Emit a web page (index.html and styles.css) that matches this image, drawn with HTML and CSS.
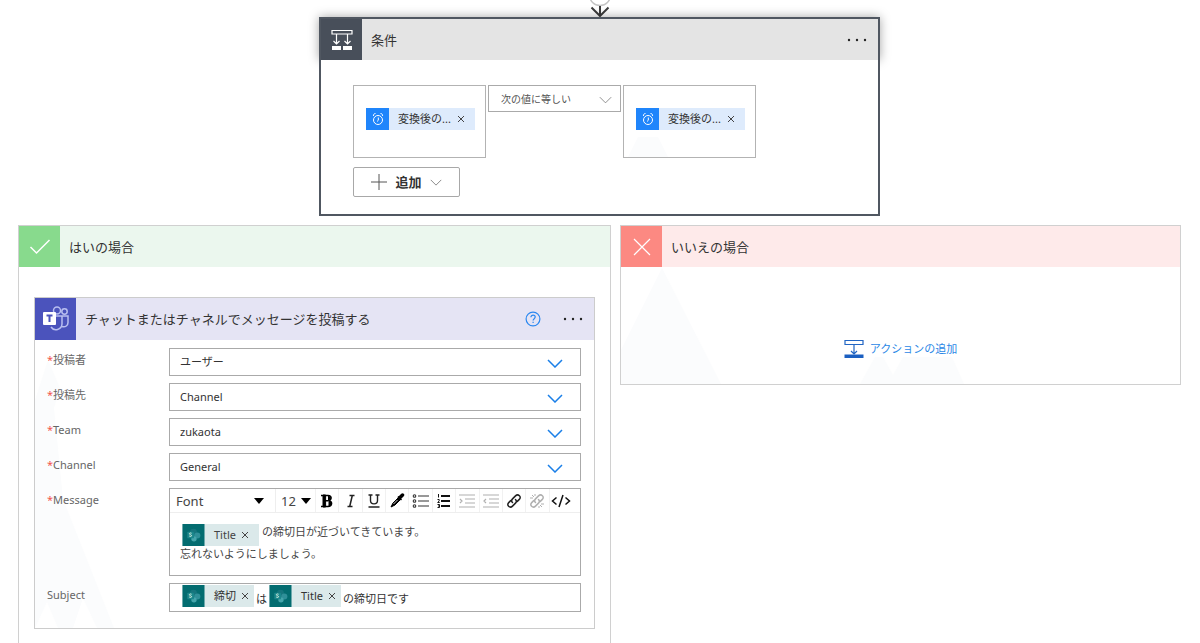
FILE: index.html
```html
<!DOCTYPE html>
<html lang="ja">
<head>
<meta charset="utf-8">
<title>条件</title>
<link rel="stylesheet" href="styles.css">
</head>
<body>
<svg class="symbols" aria-hidden="true">
  <symbol id="chevron" viewBox="0 0 16 9"><path d="M1 1l7 7 7-7" fill="none" stroke="currentColor"/></symbol>
  <symbol id="clock" viewBox="0 0 14 14"><g fill="none" stroke="#fff"><circle cx="7" cy="8" r="4.500"/><path d="M7.300 5.500v2.800L6 9.500M2.500 4a2 2 0 0 1 2-2.500M11.500 4a2 2 0 0 0-2-2.500"/></g></symbol>
  <symbol id="sharepoint" viewBox="0 0 23 23"><rect width="23" height="23" fill="#036c70"/><circle cx="11.500" cy="8.500" r="3.600" fill="#16757d"/><circle cx="15.500" cy="12" r="3.200" fill="#2f8f98"/><circle cx="12" cy="15.500" r="2.800" fill="#45a5ab"/><rect x="5" y="8" width="7" height="7" rx="1" fill="#1b878c"/><path d="M9.500 9.700c-1-.6-2.300-.3-2.300.5 0 1.200 2.300.8 2.300 2 0 .9-1.600 1.100-2.500.3" fill="none" stroke="#d8efdd"/></symbol>
  <symbol id="link" viewBox="0 0 16 16"><g fill="none" stroke="currentColor" stroke-width="1.500" stroke-linecap="round"><path d="M6.500 9.500c-1.400-1.400-1-2.600 0-3.600l3-3c1.300-1.300 2.800-1.200 3.900-.2s1.100 2.500-.1 3.700l-2 2"/><path d="M9.500 6.500c1.400 1.400 1 2.600 0 3.600l-3 3c-1.300 1.300-2.800 1.200-3.900.2s-1.100-2.500.1-3.700l2-2"/></g></symbol>
</svg>
<main class="canvas">
  <svg class="connector" viewBox="0 0 24 17" aria-hidden="true"><circle cx="12" cy="-5" r="10.500" fill="#fff" stroke="#c4c4c4" stroke-width="1.500"/><path d="M12 6v10M3.500 7.500L12 16l8.500-8.500" fill="none" stroke="#3b3b3b" stroke-width="2"/></svg>

  <section class="condition">
    <header class="card-head condition-head">
      <span class="head-icon"><svg width="24" height="24" viewBox="0 0 24 24" aria-hidden="true"><g fill="none" stroke="#fff" stroke-width="1.200"><path d="M2 2.500h20v3.500H2zM6.500 6v10M17.500 6v10M3.500 13l3 3 3-3M14.500 13l3 3 3-3"/></g><path d="M2 18h9v4H2zM13 18h9v4h-9z" fill="#fff"/></svg></span>
      <h2 class="title">条件</h2>
      <button class="more" aria-label="メニュー"><svg width="20" height="4" viewBox="0 0 20 4"><circle cx="2" cy="2" r="1.200"/><circle cx="10" cy="2" r="1.200"/><circle cx="18" cy="2" r="1.200"/></svg></button>
    </header>
    <div class="condition-body">
      <div class="expression">
        <div class="operand" role="textbox" aria-label="値"><span class="chip chip-blue"><span class="chip-icon"><svg width="14" height="14"><use href="#clock"/></svg></span><span class="chip-text">変換後の...</span><button class="chip-x" aria-label="削除"><svg width="8" height="8" viewBox="0 0 8 8"><path d="M1 1l6 6M7 1L1 7"/></svg></button></span></div>
        <div class="picker operator"><select aria-label="演算子"><option>次の値に等しい</option></select><svg class="arrow" width="13" height="8"><use href="#chevron"/></svg></div>
        <div class="operand" role="textbox" aria-label="値"><svg class="facet facet-operand" viewBox="0 0 40 20" aria-hidden="true"><path d="M10 0h20l10 20H0z"/></svg><span class="chip chip-blue"><span class="chip-icon"><svg width="14" height="14"><use href="#clock"/></svg></span><span class="chip-text">変換後の...</span><button class="chip-x" aria-label="削除"><svg width="8" height="8" viewBox="0 0 8 8"><path d="M1 1l6 6M7 1L1 7"/></svg></button></span></div>
      </div>
      <button class="add"><svg width="16" height="16" viewBox="0 0 16 16"><path d="M8 0v16M0 8h16" stroke="#555"/></svg>追加<svg class="add-arrow" width="12" height="7"><use href="#chevron"/></svg></button>
    </div>
  </section>

  <div class="branches">
    <section class="branch branch-yes">
      <header class="card-head">
        <span class="head-icon"><svg width="22" height="18" viewBox="0 0 22 18" aria-hidden="true"><path d="M1.500 9l6 6L20.500 2" fill="none" stroke="#fff" stroke-width="1.500"/></svg></span>
        <h2 class="title">はいの場合</h2>
      </header>
      <section class="action">
        <svg class="facet facet-action" viewBox="0 0 80 268" aria-hidden="true"><path d="M0 40L13 0l12 28-6 20 9 91 51 129H62l-14-30-10 30H23L12 242 0 268z"/></svg>
        <header class="card-head action-head">
          <span class="head-icon"><svg width="28" height="26" viewBox="0 0 28 26" aria-hidden="true"><g fill="none" stroke="#b9bff0" stroke-width="1.500"><circle cx="15" cy="4.500" r="3.500"/><circle cx="22.500" cy="5.500" r="2.700"/><path d="M14 10h6v8a6 6 0 0 1-11 3M20 10h6v6.500c0 3-2.500 5-6 4"/></g><rect x="1" y="6" width="13" height="13" rx="1" fill="#fff"/><path d="M4.500 9.500h6M7.500 9.500v6.500" stroke="#4b53bc" stroke-width="2"/></svg></span>
          <h3 class="title">チャットまたはチャネルでメッセージを投稿する</h3>
          <button class="help" aria-label="ヘルプ"><svg width="16" height="16" viewBox="0 0 16 16"><g fill="none" stroke="#2b88f0" stroke-width="1.200"><circle cx="8" cy="8" r="6.900"/><path d="M5.900 6.300c0-2.900 4.300-2.700 4.300-.2 0 1.500-2.100 1.700-2.100 3.400M8.100 10.700V12"/></g></svg></button>
          <button class="more" aria-label="メニュー"><svg width="20" height="4" viewBox="0 0 20 4"><circle cx="2" cy="2" r="1.200"/><circle cx="10" cy="2" r="1.200"/><circle cx="18" cy="2" r="1.200"/></svg></button>
        </header>
        <form class="fields">
          <label for="poster"><span class="star">*</span>投稿者</label>
          <div class="picker"><select id="poster"><option>ユーザー</option></select><svg class="arrow" width="16" height="9"><use href="#chevron"/></svg></div>
          <label for="place"><span class="star">*</span>投稿先</label>
          <div class="picker"><select id="place"><option>Channel</option></select><svg class="arrow" width="16" height="9"><use href="#chevron"/></svg></div>
          <label for="team"><span class="star">*</span>Team</label>
          <div class="picker"><select id="team"><option>zukaota</option></select><svg class="arrow" width="16" height="9"><use href="#chevron"/></svg></div>
          <label for="channel"><span class="star">*</span>Channel</label>
          <div class="picker"><select id="channel"><option>General</option></select><svg class="arrow" width="16" height="9"><use href="#chevron"/></svg></div>
          <span class="label" id="message"><span class="star">*</span>Message</span>
          <div class="editor">
            <div class="toolbar">
              <div class="tool-pick font-pick"><select aria-label="Font"><option>Font</option></select><svg width="10" height="6" viewBox="0 0 10 6"><path d="M0 0h10L5 6z"/></svg></div>
              <div class="tool-pick size-pick"><select aria-label="サイズ"><option>12</option></select><svg width="10" height="6" viewBox="0 0 10 6"><path d="M0 0h10L5 6z"/></svg></div>
              <div class="tools">
                <button type="button" class="tool" aria-label="太字"><svg width="16" height="16" viewBox="0 0 16 16"><path d="M2 2.500h7c4.500 0 3.500 4.500.8 5.200C13.800 8 13.500 13.500 9 13.500H2M5.200 2v12M5 7.700h4.500" fill="none" stroke="#000" stroke-width="1.500"/><path d="M4 2h2.600v12H4zM9.500 3c3.500 1 1.500 4 0 4.500zM10 8.300c3.800 1 2 4.400 0 5z" stroke="#000"/></svg></button>
                <button type="button" class="tool" aria-label="斜体"><svg width="16" height="16" viewBox="0 0 16 16"><path d="M6.500 2.500h5M4.500 13.500h5M9.300 2.500l-2.600 11" fill="none" stroke="#222" stroke-width="1.500"/></svg></button>
                <button type="button" class="tool" aria-label="下線"><svg width="16" height="16" viewBox="0 0 16 16"><path d="M2.500 2h4M9.500 2h4M4.500 2v5.500c0 4.500 7 4.500 7 0V2M2.500 14h11" fill="none" stroke="#222" stroke-width="1.400"/></svg></button>
                <button type="button" class="tool" aria-label="色"><svg width="16" height="16" viewBox="0 0 16 16"><path d="M2 14l2-4 5.500-5.500 2 2L6 12z" fill="#000" stroke="#000"/><path d="M9 3.500l3.500 3.500" stroke="#000" stroke-width="1.500"/><path d="M10.500 5l3-3" stroke="#000" stroke-width="3.500" stroke-linecap="round"/><path d="M4.500 11l4-4" stroke="#fff" stroke-width=".8"/></svg></button>
                <button type="button" class="tool" aria-label="箇条書き"><svg width="18" height="16" viewBox="0 0 18 16"><g fill="none" stroke="#333" stroke-width="1.100"><circle cx="2.500" cy="3" r="1.300"/><circle cx="2.500" cy="8" r="1.300"/><circle cx="2.500" cy="13" r="1.300"/><path d="M6 3h11M6 8h11M6 13h11"/></g></svg></button>
                <button type="button" class="tool" aria-label="番号付き"><svg width="16" height="16" viewBox="0 0 16 16"><path d="M5 3h9M5 8h9M5 13h9" stroke="#111" stroke-width="1.800"/><path d="M2.500 1v3.500M1.500 6.500h1.700v1.400l-1.500 1.600h2M1.500 11.500h2v3h-2M2 13h1.500" fill="none" stroke="#111"/></svg></button>
                <button type="button" class="tool tool-off" aria-label="インデント" disabled><svg width="18" height="16" viewBox="0 0 18 16"><path d="M1 2h16M7 6h10M7 10h10M1 14h16M2 6l2 2-2 2" fill="none" stroke="#b0b0b0" stroke-width="1.200"/></svg></button>
                <button type="button" class="tool tool-off" aria-label="インデント解除" disabled><svg width="18" height="16" viewBox="0 0 18 16"><path d="M1 2h16M7 6h10M7 10h10M1 14h16M4 6L2 8l2 2" fill="none" stroke="#b0b0b0" stroke-width="1.200"/></svg></button>
                <button type="button" class="tool" aria-label="リンク"><svg width="16" height="16"><use href="#link"/></svg></button>
                <button type="button" class="tool tool-off" aria-label="リンク解除" disabled><svg width="16" height="16" viewBox="0 0 16 16"><use href="#link"/><path d="M3 2l2 2M1 5h3M6 1v2M13 14l-2-2M15 11h-3M10 15v-2" stroke="#b0b0b0"/></svg></button>
                <button type="button" class="tool" aria-label="コード"><svg width="20" height="16" viewBox="0 0 20 16"><path d="M5.500 4.500L1.500 8l4 3.500M14.500 4.500l4 3.500-4 3.500M12 2L8 14" fill="none" stroke="#111" stroke-width="1.500"/></svg></button>
              </div>
            </div>
            <div class="message" role="textbox" contenteditable="true" spellcheck="false" aria-labelledby="message"><div class="line"><span class="chip chip-teal"><svg class="chip-logo" width="23" height="22"><use href="#sharepoint"/></svg><span class="chip-text">Title</span><button type="button" class="chip-x" aria-label="削除"><svg width="8" height="8" viewBox="0 0 8 8"><path d="M1 1l6 6M7 1L1 7"/></svg></button></span><span>の締切日が近づいてきています。</span></div><div>忘れないようにしましょう。</div></div>
          </div>
          <span class="label" id="subject">Subject</span>
          <div class="subject" role="textbox" contenteditable="true" spellcheck="false" aria-labelledby="subject"><span class="chip chip-teal"><svg class="chip-logo" width="23" height="22"><use href="#sharepoint"/></svg><span class="chip-text">締切</span><button type="button" class="chip-x" aria-label="削除"><svg width="8" height="8" viewBox="0 0 8 8"><path d="M1 1l6 6M7 1L1 7"/></svg></button></span><span>は</span><span class="chip chip-teal"><svg class="chip-logo" width="23" height="22"><use href="#sharepoint"/></svg><span class="chip-text">Title</span><button type="button" class="chip-x" aria-label="削除"><svg width="8" height="8" viewBox="0 0 8 8"><path d="M1 1l6 6M7 1L1 7"/></svg></button></span><span>の締切日です</span></div>
        </form>
      </section>
    </section>

    <section class="branch branch-no">
      <svg class="facet facet-no" viewBox="0 0 350 116" aria-hidden="true"><path d="M0 82L41 0l59 116H0z"/><path d="M239 116l15-27h8l10 18 10-18h49l12 27z"/></svg>
      <header class="card-head">
        <span class="head-icon"><svg width="18" height="18" viewBox="0 0 18 18" aria-hidden="true"><path d="M1 1l16 16M17 1L1 17" stroke="#fff" stroke-width="1.200"/></svg></span>
        <h2 class="title">いいえの場合</h2>
      </header>
      <div class="empty">
        <button class="add-action"><svg width="20" height="20" viewBox="0 0 20 20" aria-hidden="true"><path d="M1 1.500h18v4H1zM10 6v9M7 12l3 3 3-3" fill="none" stroke="#2266c4" stroke-width="1.200"/><path d="M.5 15.500h19V19H.5z" fill="#1b5fc1"/></svg>アクションの追加</button>
      </div>
    </section>
  </div>
</main>
</body>
</html>
```

FILE: styles.css
```css
* { box-sizing: border-box; }

html, body { height: 100%; }

body {
  margin: 0;
  overflow: hidden;
  background: #fff;
  color: #333;
  font: 11px/22px "Noto Sans", "Noto Sans CJK JP", sans-serif;
}

svg { display: block; flex: none; }

button, select {
  margin: 0;
  padding: 0;
  border: 0;
  border-radius: 0;
  background: none;
  color: inherit;
  font: inherit;
}

button {
  display: flex;
  align-items: center;
  justify-content: center;
}

select { appearance: none; width: 100%; height: 100%; }

.symbols { position: absolute; width: 0; height: 0; }

.canvas {
  display: flex;
  flex-direction: column;
  padding: 0 19px 0 18px;
}

.connector { width: 24px; height: 17px; align-self: center; }

/* Shared card header */
.card-head { display: flex; align-items: center; height: 41px; position: relative; }

.head-icon {
  display: flex;
  flex: none;
  align-items: center;
  justify-content: center;
  width: 41px;
  height: 100%;
}

.title { flex: 1; margin: 0; padding-left: 9px; font-size: 13px; font-weight: 400; }

.more { width: 20px; height: 20px; margin-right: 11px; fill: #222; }

.facet { position: absolute; fill: #fbfcfd; pointer-events: none; }

/* Condition */
.condition { width: 561px; max-width: 100%; align-self: center; }

.condition-head {
  height: 43px;
  border: 2px solid #505761;
  border-bottom: 0;
  background: #e4e4e4;
  box-shadow: 0 0 10px rgba(0, 0, 0, .35);
}

.condition-head .head-icon { background: #484f5a; }

.condition-body {
  position: relative;
  padding: 25px 32px 17px;
  border: 2px solid #505761;
  border-top: 0;
  background: #fff;
}

.expression { display: flex; align-items: flex-start; gap: 2px; }

.operand {
  position: relative;
  width: 133px;
  height: 73px;
  padding: 22px 12px;
  border: 1px solid #b3b3b3;
}

.operand .chip { width: 109px; }

.facet-operand { left: 4px; bottom: 0; width: 40px; height: 20px; }

.add {
  gap: 8px;
  width: 107px;
  height: 30px;
  margin-top: 9px;
  border: 1px solid #a8a8a8;
  border-radius: 2px;
  font-size: 13px;
  font-weight: 600;
}

.add-arrow { color: #666; }

/* Drop-downs */
.picker { position: relative; height: 28px; border: 1px solid #aaa; background: #fff; }
.picker select { padding: 0 32px 0 10px; }
.picker .arrow {
  position: absolute;
  top: 10px;
  right: 17px;
  color: #1a7fe8;
  stroke-width: 1.5;
  pointer-events: none;
}

.operator { width: 133px; height: 27px; }
.operator select { padding-left: 12px; color: #555; font-size: 10px; }
.operator .arrow { right: 8px; color: #777; stroke-width: 1; }

/* Tokens */
.chip { position: relative; display: inline-flex; align-items: center; height: 22px; }
.chip-blue { background: #deebfc; }
.chip-teal { background: #dbe9ea; }
.chip-text { padding-left: 9px; }

.chip-icon {
  display: flex;
  align-items: center;
  justify-content: center;
  width: 23px;
  height: 100%;
  background: #1f85fb;
}

.chip-x { width: 18px; height: 18px; }
.chip-x svg { stroke: #444; }
.chip-blue .chip-x { margin-left: auto; margin-right: 5px; }

/* Branches */
.branches {
  display: grid;
  grid-template-columns: 593fr 561fr;
  align-items: start;
  gap: 9px;
  margin-top: 9px;
}

.branch { position: relative; border: 1px solid #d0d0d0; }
.branch-yes { padding-bottom: 40px; }
.branch-yes > .card-head { background: #ebf7ee; }
.branch-yes > .card-head .head-icon { background: #88da8d; }
.branch-no > .card-head { background: #feeaea; }
.branch-no > .card-head .head-icon { background: #fc8982; }

.empty { position: relative; display: flex; justify-content: center; padding: 72px 0 25px; }
.facet-no { top: 42px; left: 0; width: 350px; height: 116px; }
.add-action { gap: 6px; height: 20px; color: #2b88e6; }

/* Teams action */
.action {
  position: relative;
  margin: 30px 15px 0;
  border: 1px solid #ccc;
}

.action-head { height: 42px; background: #e5e4f4; }
.action-head .head-icon { background: #4b53bc; }
.help { width: 18px; height: 20px; margin-right: 21px; }
.facet-action { left: 0; bottom: 0; width: 80px; height: 268px; }

.fields {
  position: relative;
  display: grid;
  grid-template-columns: 122px 1fr;
  gap: 7px 0;
  padding: 8px 13px 16px 12px;
}

.fields label, .label { display: flex; color: #666; line-height: 24px; }
.star { width: 6px; color: #f2564d; }

.editor { height: 88px; border: 1px solid #aaa; background: #fff; }

.toolbar { display: flex; height: 24px; padding-right: 8px; border-bottom: 1px solid #eee; }

.tool-pick { position: relative; color: #444; font-size: 13px; }
.tool-pick select { padding-left: 6px; }
.tool-pick svg { position: absolute; top: 9px; right: 11px; fill: #000; pointer-events: none; }
.font-pick { width: 106px; border-right: 1px solid #eee; }
.size-pick { width: 39px; }
.size-pick select { padding-left: 5px; }
.size-pick svg { right: 4px; }

.tools { display: grid; flex: 1; grid-template-columns: repeat(11, 1fr); }
.tool { min-width: 0; border-left: 1px solid #f1f1f1; color: #222; }
.tool-off { color: #b0b0b0; }

.message { padding: 8px 10px; color: #444; line-height: 22px; outline: 0; }
.line { display: flex; gap: 3px; padding-left: 2px; }
.line .chip { margin-top: 3px; margin-bottom: -3px; padding-right: 5px; }

.subject {
  display: flex;
  gap: 2px;
  height: 29px;
  padding: 1px 12px;
  border: 1px solid #aaa;
  background: #fff;
  line-height: 28px;
  outline: 0;
}
```
